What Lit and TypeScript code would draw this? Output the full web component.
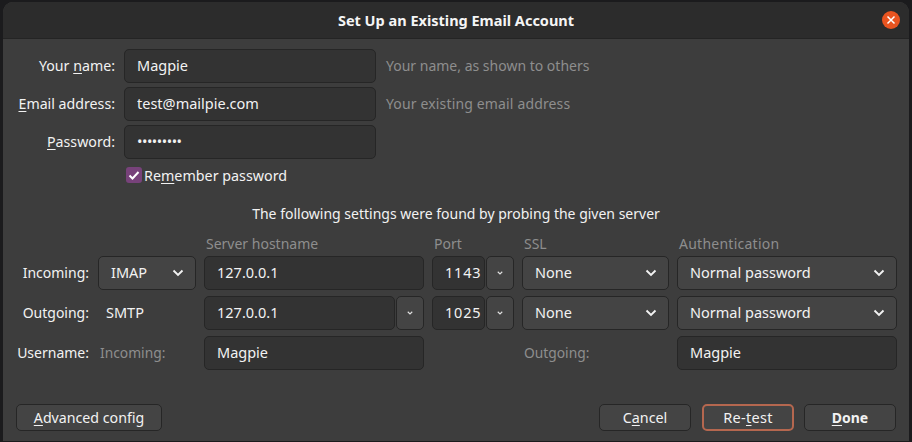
import { LitElement, html, css } from 'lit';
import { customElement } from 'lit/decorators.js';

const chevron = (small = false) => html`
  <svg class=${small ? 'chev small' : 'chev'} viewBox="0 0 12 8" aria-hidden="true">
    <path d="M1.5 1.5 6 6l4.5-4.5" fill="none" stroke="currentColor" stroke-width=${small ? 2.2 : 1.9} />
  </svg>
`;

@customElement('app-root')
export class AppRoot extends LitElement {
  static styles = css`
    :host {
      display: block;
      width: 912px;
      height: 442px;
      box-sizing: border-box;
      padding: 2px 3px 1px;
      background: #1b1b1d;
      overflow: hidden;
      font-family: 'Noto Sans', 'Open Sans', sans-serif;
      font-size: 14.5px;
      color: #f2f2f2;
    }
    .window {
      height: 100%;
      display: flex;
      flex-direction: column;
      background: #3d3d3d;
      border-radius: 10px 10px 0 0;
      overflow: hidden;
    }
    .titlebar {
      height: 36px;
      flex: none;
      display: flex;
      align-items: center;
      justify-content: center;
      position: relative;
      background: #2c2c2c;
      border-bottom: 1px solid #242424;
      font-weight: 700;
      font-size: 14.5px;
      color: #f5f5f5;
    }
    .close {
      position: absolute;
      right: 9px;
      top: 9px;
      width: 18px;
      height: 18px;
      border-radius: 50%;
      background: #e95420;
      display: flex;
      align-items: center;
      justify-content: center;
    }
    .close svg { width: 10px; height: 10px; }
    .identity {
      display: grid;
      grid-template-columns: 112px 252px auto;
      column-gap: 9px;
      row-gap: 4px;
      margin-top: 10px;
      align-items: center;
    }
    .label { text-align: right; white-space: nowrap; padding-bottom: 2px; font-size: 14.2px; }
    .hint { color: #8e8e8e; margin-left: 1px; font-size: 14px; padding-bottom: 2px; }
    .hint.wide { letter-spacing: 0.15px; }
    .field {
      height: 34px;
      box-sizing: border-box;
      width: 100%;
      min-width: 0;
      padding: 0 12px 2px;
      border: 1px solid #262626;
      border-radius: 5px;
      background: #333333;
      color: #f2f2f2;
      font: inherit;
      outline: none;
    }
    .field.pw { letter-spacing: -0.5px; }
    .field.port { padding-right: 0; letter-spacing: 0.8px; }
    .remember {
      grid-column: 2 / 4;
      display: flex;
      align-items: center;
      gap: 2px;
      margin-left: 2px;
      height: 24px;
    }
    .remember span { font-size: 14.3px; }
    .check {
      width: 16px;
      height: 16px;
      border-radius: 3px;
      background: #77427a;
      display: flex;
      align-items: center;
      justify-content: center;
    }
    .check svg { width: 12px; height: 12px; }
    .notice {
      text-align: center;
      margin-top: 17px;
      height: 20px;
      line-height: 20px;
      font-size: 14px;
    }
    .server {
      display: grid;
      grid-template-columns: 74px 98px 220px 82px 147px 220px;
      column-gap: 8px;
      row-gap: 6px;
      margin: 10px 0 0 13px;
      align-items: center;
    }
    .server .label { padding-right: 1px; font-size: 14px; }
    .head {
      color: #8e8e8e;
      padding-left: 2px;
      height: 20px;
      line-height: 20px;
      margin-bottom: -4px;
      font-size: 14px;
    }
    .head.auth { letter-spacing: 0.25px; }
    .muted { color: #8e8e8e; font-size: 13.8px; padding-bottom: 2px; }
    .select {
      height: 34px;
      box-sizing: border-box;
      display: flex;
      align-items: center;
      justify-content: space-between;
      padding: 0 11px 0 12px;
      border: 1px solid #262626;
      border-radius: 5px;
      background: #444444;
    }
    .select span { padding-bottom: 2px; }
    .chev { width: 12px; height: 8px; color: #f2f2f2; flex: none; }
    .chev.small { width: 6px; height: 4px; color: #e0e0e0; }
    .combo { display: flex; gap: 1px; min-width: 0; }
    .combo .field { flex: 1; }
    .spin {
      flex: none;
      width: 28px;
      height: 34px;
      box-sizing: border-box;
      display: flex;
      align-items: center;
      justify-content: center;
      border: 1px solid #262626;
      border-radius: 5px;
      background: #444444;
    }
    .smtp { padding: 0 0 2px 8px; }
    .user-sub { padding-left: 2px; white-space: nowrap; }
    .footer {
      margin-top: auto;
      display: flex;
      gap: 10px;
      padding: 0 13px 10px;
    }
    button {
      height: 27px;
      box-sizing: border-box;
      width: 92px;
      padding: 0 0 1px;
      border: 1px solid #262626;
      border-radius: 5px;
      background: #444444;
      color: #f2f2f2;
      font: inherit;
    }
    button.advanced { width: 146px; margin-right: auto; font-size: 14.2px; }
    button.cancel { margin-right: 1px; font-size: 14.3px; }
    button.focused { border: 2px solid #b5674f; font-size: 14.5px; letter-spacing: 0.3px; }
    button.default { font-weight: 700; font-size: 14px; }
    u { text-underline-offset: 2px; }
  `;

  render() {
    return html`
      <div class="window">
        <div class="titlebar">
          Set Up an Existing Email Account
          <div class="close">
            <svg viewBox="0 0 10 10"><path d="M1.5 1.5l7 7M8.5 1.5l-7 7" stroke="#fff" stroke-width="1.5" /></svg>
          </div>
        </div>

        <div class="identity">
          <div class="label">Your <u>n</u>ame:</div>
          <input class="field" .value=${'Magpie'} />
          <div class="hint">Your name, as shown to others</div>

          <div class="label"><u>E</u>mail address:</div>
          <input class="field" .value=${'test@mailpie.com'} />
          <div class="hint wide">Your existing email address</div>

          <div class="label"><u>P</u>assword:</div>
          <input class="field pw" type="password" .value=${'magpie123'} />
          <div></div>

          <div></div>
          <div class="remember">
            <div class="check">
              <svg viewBox="0 0 12 12"><path d="M1.5 6.5 4.5 9.5 10.5 3" fill="none" stroke="#fff" stroke-width="2" /></svg>
            </div>
            <span>Re<u>m</u>ember password</span>
          </div>
        </div>

        <div class="notice">The following settings were found by probing the given server</div>

        <div class="server">
          <div></div>
          <div></div>
          <div class="head">Server hostname</div>
          <div class="head">Port</div>
          <div class="head">SSL</div>
          <div class="head auth">Authentication</div>

          <div class="label">Incoming:</div>
          <div class="select"><span>IMAP</span>${chevron()}</div>
          <input class="field" .value=${'127.0.0.1'} />
          <div class="combo">
            <input class="field port" .value=${'1143'} />
            <div class="spin">${chevron(true)}</div>
          </div>
          <div class="select"><span>None</span>${chevron()}</div>
          <div class="select"><span>Normal password</span>${chevron()}</div>

          <div class="label">Outgoing:</div>
          <div class="smtp">SMTP</div>
          <div class="combo">
            <input class="field" .value=${'127.0.0.1'} />
            <div class="spin">${chevron(true)}</div>
          </div>
          <div class="combo">
            <input class="field port" .value=${'1025'} />
            <div class="spin">${chevron(true)}</div>
          </div>
          <div class="select"><span>None</span>${chevron()}</div>
          <div class="select"><span>Normal password</span>${chevron()}</div>

          <div class="label">Username:</div>
          <div class="muted user-sub">Incoming:</div>
          <input class="field" .value=${'Magpie'} />
          <div></div>
          <div class="muted user-sub">Outgoing:</div>
          <input class="field" .value=${'Magpie'} />
        </div>

        <div class="footer">
          <button class="advanced"><u>A</u>dvanced config</button>
          <button class="cancel">C<u>a</u>ncel</button>
          <button class="focused">Re-<u>t</u>est</button>
          <button class="default"><u>D</u>one</button>
        </div>
      </div>
    `;
  }
}
